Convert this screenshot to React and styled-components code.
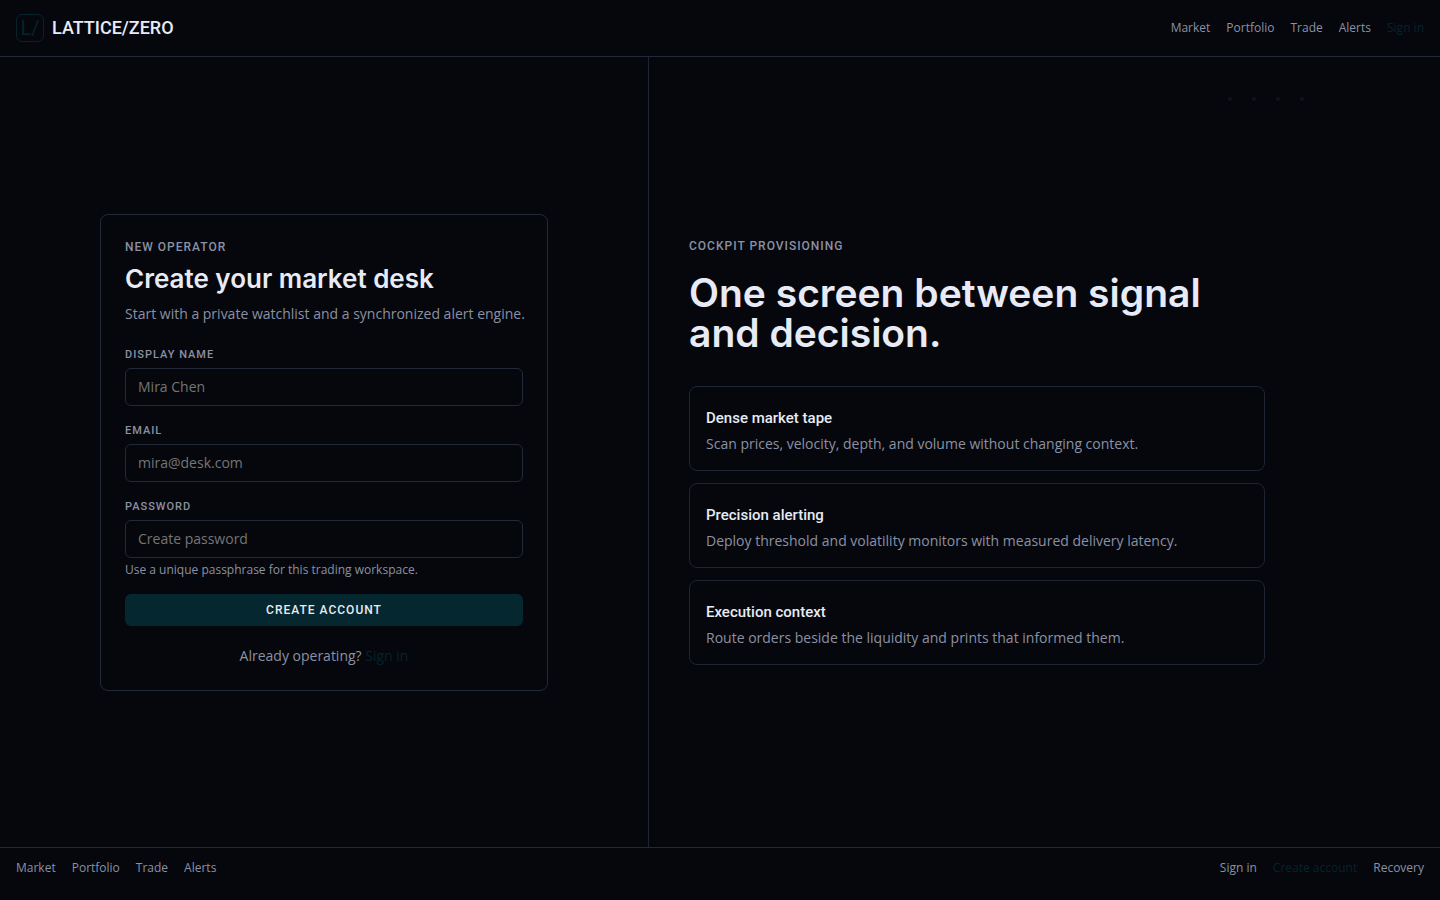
import React, { useState } from 'react';
import styled, { createGlobalStyle } from 'styled-components';

const GlobalStyle = createGlobalStyle`
  *,
  *::before,
  *::after {
    box-sizing: border-box;
  }

  body {
    margin: 0;
    background: #05070d;
    color: #e8ebf5;
    font-family: "Open Sans", "Liberation Sans", sans-serif;
    font-size: 14px;
  }

  h1, h2, h3, p, ul {
    margin: 0;
    padding: 0;
  }

  ul {
    list-style: none;
  }

  a {
    text-decoration: none;
  }
`;

const Page = styled.div`
  display: flex;
  flex-direction: column;
  min-height: 100vh;
`;

const Header = styled.header`
  display: flex;
  align-items: center;
  justify-content: space-between;
  padding: 14px 16px;
  border-bottom: 1px solid #222a39;
`;

const Brand = styled.a`
  display: flex;
  align-items: center;
  gap: 8px;
  color: #e8ebf5;
  font-family: Roboto, sans-serif;
  font-size: 18px;
  font-weight: 500;
  line-height: 28px;
`;

const BrandMark = styled.span`
  display: flex;
  align-items: center;
  justify-content: center;
  width: 28px;
  height: 28px;
  border: 1px solid #06232b;
  border-radius: 6px;
  color: #06232b;
  font-size: 20px;
  font-weight: 400;
`;

const Nav = styled.nav`
  display: flex;
  gap: 16px;
`;

const NavLink = styled.a`
  color: ${(props) => (props.$active ? '#06232b' : '#8b91a3')};
  font-size: 12px;
  line-height: 16px;
`;

const Main = styled.main`
  flex: 1;
  display: grid;
  grid-template-columns: 9fr 11fr;
`;

const FormSide = styled.section`
  display: flex;
  align-items: center;
  justify-content: center;
  padding: 24px;
`;

const StorySide = styled.section`
  position: relative;
  display: flex;
  flex-direction: column;
  justify-content: center;
  padding: 24px 40px 25px;
  border-left: 1px solid #1d2433;
`;

const Dots = styled.svg`
  position: absolute;
  top: 40px;
  right: 135px;
`;

const Card = styled.div`
  width: 100%;
  max-width: 448px;
  padding: 24px;
  border: 1px solid #222a39;
  border-radius: 8px;
`;

const Eyebrow = styled.p`
  color: #8b91a3;
  font-family: Roboto, sans-serif;
  font-size: 12px;
  font-weight: 500;
  letter-spacing: 1px;
  line-height: 16px;
  text-transform: uppercase;
`;

const Title = styled.h1`
  margin: 8px 0;
  font-family: Inter, sans-serif;
  font-size: 26px;
  font-weight: 600;
  line-height: 32px;
`;

const Text = styled.p`
  color: #8b91a3;
  line-height: 21px;
  white-space: ${(props) => (props.$oneLine ? 'nowrap' : 'normal')};
`;

const Form = styled.form`
  display: flex;
  flex-direction: column;
  gap: 16px;
  margin: 22px 0 20px;
`;

const Field = styled.div`
  display: flex;
  flex-direction: column;
  gap: 4px;
`;

const Label = styled.label`
  color: #8b91a3;
  font-family: Roboto, sans-serif;
  font-size: 11px;
  font-weight: 500;
  letter-spacing: 1px;
  line-height: 18px;
  text-transform: uppercase;
`;

const Input = styled.input`
  width: 100%;
  height: 38px;
  padding: 0 12px;
  border: 1px solid #222a39;
  border-radius: 6px;
  background: #05070d;
  color: #e8ebf5;
  font: inherit;

  &::placeholder {
    color: #757575;
  }
`;

const Hint = styled.p`
  color: #8b91a3;
  font-size: 12px;
  line-height: 16px;
`;

const Button = styled.button`
  height: 32px;
  border: none;
  border-radius: 6px;
  background: #05272f;
  color: #e8ebf5;
  font-family: Roboto, sans-serif;
  font-size: 12px;
  font-weight: 500;
  letter-spacing: 1px;
  text-transform: uppercase;
  cursor: pointer;
`;

const SwitchLine = styled.p`
  color: #8b91a3;
  line-height: 20px;
  text-align: center;

  a {
    color: #06232b;
  }
`;

const Headline = styled.h2`
  max-width: 576px;
  margin: 19px 0 33px;
  font-family: Inter, sans-serif;
  font-size: 39px;
  font-weight: 600;
  line-height: 40px;
`;

const FeatureList = styled.ul`
  display: flex;
  flex-direction: column;
  gap: 12px;
  max-width: 576px;
`;

const Feature = styled.li`
  padding: 20px 16px 16px;
  border: 1px solid #1d2433;
  border-radius: 8px;
`;

const FeatureTitle = styled.h3`
  margin-bottom: 4px;
  font-family: Roboto, sans-serif;
  font-size: 15px;
  font-weight: 500;
  line-height: 22px;
`;

const Footer = styled.footer`
  display: flex;
  justify-content: space-between;
  padding: 12px 16px 24px;
  border-top: 1px solid #222a39;
`;

const links = ['Market', 'Portfolio', 'Trade', 'Alerts'];

const fields = [
  { name: 'name', label: 'Display name', type: 'text', placeholder: 'Mira Chen' },
  { name: 'email', label: 'Email', type: 'email', placeholder: 'mira@desk.com' },
  {
    name: 'password',
    label: 'Password',
    type: 'password',
    placeholder: 'Create password',
    hint: 'Use a unique passphrase for this trading workspace.',
  },
];

const features = [
  {
    title: 'Dense market tape',
    text: 'Scan prices, velocity, depth, and volume without changing context.',
  },
  {
    title: 'Precision alerting',
    text: 'Deploy threshold and volatility monitors with measured delivery latency.',
  },
  {
    title: 'Execution context',
    text: 'Route orders beside the liquidity and prints that informed them.',
  },
];

function SignUpForm() {
  const [values, setValues] = useState({ name: '', email: '', password: '' });

  const handleChange = (e) => {
    setValues({ ...values, [e.target.name]: e.target.value });
  };

  const handleSubmit = (e) => {
    e.preventDefault();
  };

  return (
    <Form onSubmit={handleSubmit}>
      {fields.map((field) => (
        <Field key={field.name}>
          <Label htmlFor={field.name}>{field.label}</Label>
          <Input
            id={field.name}
            name={field.name}
            type={field.type}
            placeholder={field.placeholder}
            value={values[field.name]}
            onChange={handleChange}
          />
          {field.hint && <Hint>{field.hint}</Hint>}
        </Field>
      ))}
      <Button type="submit">Create account</Button>
    </Form>
  );
}

function App() {
  return (
    <Page>
      <GlobalStyle />
      <Header>
        <Brand href="#home">
          <BrandMark>L/</BrandMark>
          LATTICE/ZERO
        </Brand>
        <Nav>
          {links.map((link) => (
            <NavLink key={link} href="#">{link}</NavLink>
          ))}
          <NavLink href="#" $active>Sign in</NavLink>
        </Nav>
      </Header>
      <Main>
        <FormSide>
          <Card>
            <Eyebrow>New operator</Eyebrow>
            <Title>Create your market desk</Title>
            <Text $oneLine>Start with a private watchlist and a synchronized alert engine.</Text>
            <SignUpForm />
            <SwitchLine>
              Already operating? <a href="#">Sign in</a>
            </SwitchLine>
          </Card>
        </FormSide>
        <StorySide>
          <Dots width="78" height="5" fill="#11141f" aria-hidden="true">
            {[3, 27, 51, 75].map((x) => (
              <circle key={x} cx={x} cy="2" r="2" />
            ))}
          </Dots>
          <Eyebrow>Cockpit provisioning</Eyebrow>
          <Headline>One screen between signal and decision.</Headline>
          <FeatureList>
            {features.map((feature) => (
              <Feature key={feature.title}>
                <FeatureTitle>{feature.title}</FeatureTitle>
                <Text>{feature.text}</Text>
              </Feature>
            ))}
          </FeatureList>
        </StorySide>
      </Main>
      <Footer>
        <Nav>
          {links.map((link) => (
            <NavLink key={link} href="#">{link}</NavLink>
          ))}
        </Nav>
        <Nav>
          <NavLink href="#">Sign in</NavLink>
          <NavLink href="#" $active>Create account</NavLink>
          <NavLink href="#">Recovery</NavLink>
        </Nav>
      </Footer>
    </Page>
  );
}

export default App;
